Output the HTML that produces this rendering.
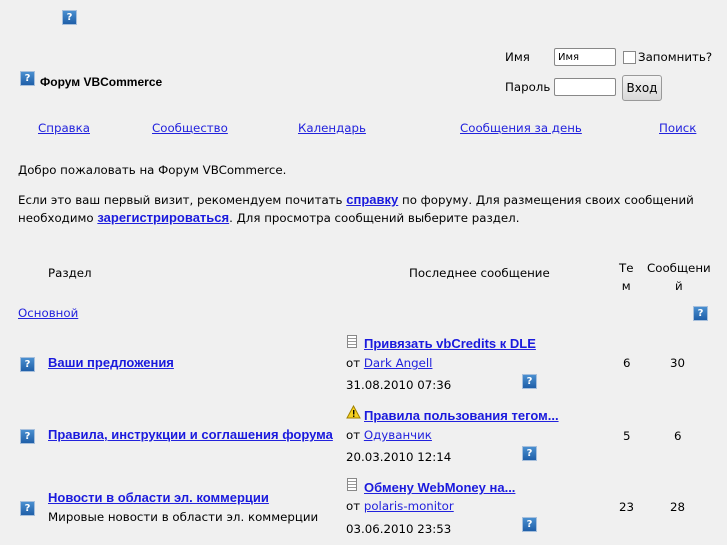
<!DOCTYPE html>
<html><head><meta charset="utf-8"><style>
body{margin:0;background:#f0f0f0;font-family:"DejaVu Sans","Liberation Sans",sans-serif;font-size:11.8px;color:#000;width:727px;height:545px;overflow:hidden;position:relative}
.a{position:absolute;white-space:nowrap}
a{color:#2222dd;text-decoration:underline}
b{font-family:"Liberation Sans",sans-serif;font-size:13px}
b a,a b{color:#1a1add}
.q{position:absolute;width:13px;height:13px;background:linear-gradient(#4a8fd0,#1f5fa8);border:1px solid #a8c0dc;color:#fff;font-size:10px;font-weight:bold;line-height:13px;text-align:center;font-family:"DejaVu Sans",sans-serif}
input.t{position:absolute;height:18px;border:1px solid #888;border-radius:2px;background:#fff;padding:0 3px;font-size:10px;box-sizing:border-box;font-family:"DejaVu Sans",sans-serif}
.btn{position:absolute;border:1px solid #999;border-radius:3px;background:linear-gradient(#f4f4f4,#d8d8d8);font-size:12px;text-align:center;line-height:24px}
.doc{position:absolute;width:10px;height:13px;border:1px solid #888;background:repeating-linear-gradient(#fff 0 2px,#999 2px 3px);box-sizing:border-box}
</style></head><body>
<div class="q" style="left:62px;top:10px">?</div>
<div class="q" style="left:20px;top:71px">?</div>
<div class="a" style="left:40px;top:75px;font-weight:bold;font-size:12px;font-family:'Liberation Sans',sans-serif">Форум VBCommerce</div>
<div class="a" style="left:505px;top:50px">Имя</div>
<input class="t" style="left:554px;top:48px;width:62px" value="Имя">
<div style="position:absolute;left:623px;top:51px;width:11px;height:11px;border:1px solid #888;background:#fff"></div>
<div class="a" style="left:638px;top:50px">Запомнить?</div>
<div class="a" style="left:505px;top:80px">Пароль</div>
<input class="t" style="left:554px;top:78px;width:62px">
<div class="btn" style="left:622px;top:75px;width:38px;height:24px">Вход</div>
<a class="a" style="left:38px;top:121px" href="#">Справка</a>
<a class="a" style="left:152px;top:121px" href="#">Сообщество</a>
<a class="a" style="left:298px;top:121px" href="#">Календарь</a>
<a class="a" style="left:460px;top:121px" href="#">Сообщения за день</a>
<a class="a" style="left:659px;top:121px" href="#">Поиск</a>
<div class="a" style="left:18px;top:163px">Добро пожаловать на Форум VBCommerce.</div>
<div class="a" style="left:18px;top:192px">Если это ваш первый визит, рекомендуем почитать <a href="#"><b>справку</b></a> по форуму. Для размещения своих сообщений</div>
<div class="a" style="left:18px;top:210px">необходимо <a href="#"><b>зарегистрироваться</b></a>. Для просмотра сообщений выберите раздел.</div>
<div class="a" style="left:48px;top:266px">Раздел</div>
<div class="a" style="left:409px;top:266px">Последнее сообщение</div>
<div class="a" style="left:619px;top:259px;line-height:18px;text-align:center">Те<br>м</div>
<div class="a" style="left:647px;top:259px;line-height:18px;text-align:center">Сообщени<br>й</div>
<a class="a" style="left:18px;top:306px" href="#">Основной</a>
<div class="q" style="left:693px;top:306px">?</div>

<div class="q" style="left:20px;top:357px">?</div>
<a class="a" style="left:48px;top:355px" href="#"><b>Ваши предложения</b></a>
<div class="doc" style="left:347px;top:335px"></div>
<a class="a" style="left:364px;top:336px" href="#"><b>Привязать vbCredits к DLE</b></a>
<div class="a" style="left:346px;top:356px">от <a href="#">Dark Angell</a></div>
<div class="a" style="left:346px;top:378px">31.08.2010 07:36</div>
<div class="q" style="left:522px;top:374px">?</div>
<div class="a" style="left:623px;top:356px">6</div>
<div class="a" style="left:670px;top:356px">30</div>

<div class="q" style="left:20px;top:429px">?</div>
<a class="a" style="left:48px;top:427px" href="#"><b>Правила, инструкции и соглашения форума</b></a>
<svg style="position:absolute;left:346px;top:405px" width="15" height="14"><path d="M7.5 1L14 13H1Z" fill="#f5d020" stroke="#a08000"/><rect x="7" y="5" width="1.4" height="4.5"/><rect x="7" y="10.5" width="1.4" height="1.4"/></svg>
<a class="a" style="left:364px;top:408px" href="#"><b>Правила пользования тегом...</b></a>
<div class="a" style="left:346px;top:428px">от <a href="#">Одуванчик</a></div>
<div class="a" style="left:346px;top:450px">20.03.2010 12:14</div>
<div class="q" style="left:522px;top:446px">?</div>
<div class="a" style="left:623px;top:429px">5</div>
<div class="a" style="left:674px;top:429px">6</div>

<div class="q" style="left:20px;top:501px">?</div>
<a class="a" style="left:48px;top:490px" href="#"><b>Новости в области эл. коммерции</b></a>
<div class="a" style="left:48px;top:510px">Мировые новости в области эл. коммерции</div>
<div class="doc" style="left:347px;top:478px"></div>
<a class="a" style="left:364px;top:480px" href="#"><b>Обмену WebMoney на...</b></a>
<div class="a" style="left:346px;top:499px">от <a href="#">polaris-monitor</a></div>
<div class="a" style="left:346px;top:522px">03.06.2010 23:53</div>
<div class="q" style="left:522px;top:517px">?</div>
<div class="a" style="left:619px;top:500px">23</div>
<div class="a" style="left:670px;top:500px">28</div>
</body></html>
